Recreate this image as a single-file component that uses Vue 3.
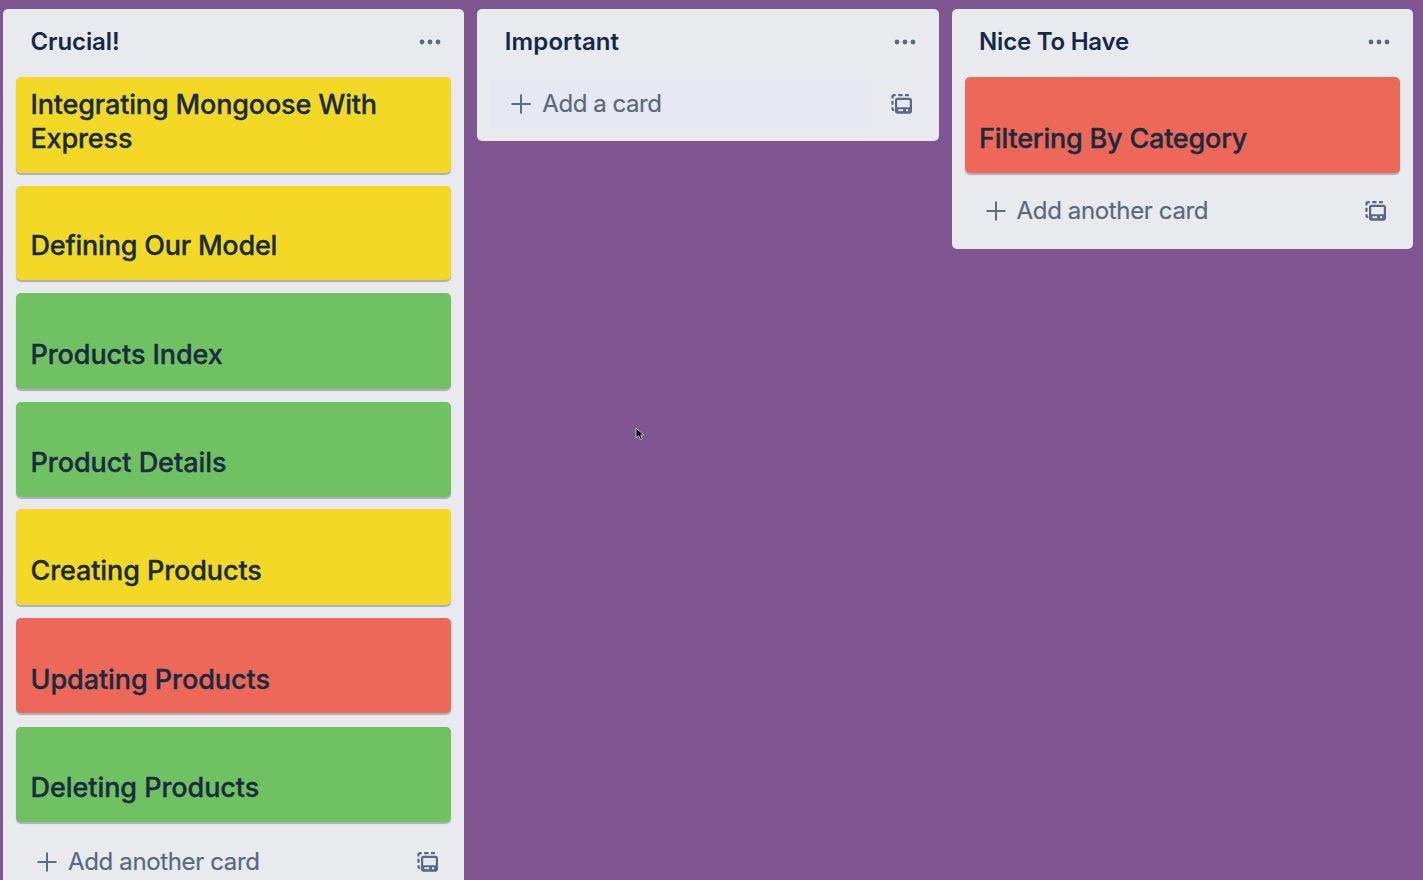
<script setup>
const lists = [
  {
    title: 'Crucial!',
    kind: 'crucial',
    action: 'Add another card',
    cards: [
      { title: 'Integrating Mongoose With Express', color: 'yellow', fit: 'mongoose' },
      { title: 'Defining Our Model', color: 'yellow', fit: 'model' },
      { title: 'Products Index', color: 'green', fit: 'index' },
      { title: 'Product Details', color: 'green', fit: 'details' },
      { title: 'Creating Products', color: 'yellow', fit: 'creating' },
      { title: 'Updating Products', color: 'red', fit: 'updating' },
      { title: 'Deleting Products', color: 'green', fit: 'deleting' },
    ],
  },
  { title: 'Important', kind: 'important', action: 'Add a card', cards: [] },
  {
    title: 'Nice To Have',
    kind: 'nice',
    action: 'Add another card',
    cards: [{ title: 'Filtering By Category', color: 'red', fit: 'category' }],
  },
]
</script>

<template>
  <main class="board">
    <section v-for="list in lists" :key="list.title" class="list" :class="list.kind">
      <header class="head">
        <h2>{{ list.title }}</h2>
        <svg class="dots" width="22" height="6" viewBox="0 0 22 6">
          <circle cx="3" cy="3" r="2.4" /><circle cx="11" cy="3" r="2.4" /><circle cx="19" cy="3" r="2.4" />
        </svg>
      </header>
      <div v-if="list.cards.length" class="cards">
        <article v-for="card in list.cards" :key="card.title" class="card" :class="[card.color, card.fit]">
          <span>{{ card.title }}</span>
        </article>
      </div>
      <footer class="foot" :class="{ empty: !list.cards.length }">
        <svg class="plus" width="20" height="20" viewBox="0 0 20 20">
          <path d="M10 0.5V19.5M0.5 10H19.5" />
        </svg>
        <span class="action">{{ list.action }}</span>
        <svg class="template" width="22" height="20" viewBox="0 0 22 20">
          <path class="dash" d="M1.5 4.4V2.8Q1.5 1.2 3.1 1.2H4.7M7.2 1.2H11.5M14 1.2H17.9M1.5 6.8V10.8M1.5 13.2V14.6Q1.5 16.1 3.2 16.1" />
          <rect class="frame" x="5.1" y="4.8" width="14.8" height="13.8" rx="1.6" />
          <path class="fill" fill-rule="evenodd" d="M5 13.3H20V19H5ZM7.4 15.3V17.3H12.2V15.3ZM15 15.3V17.3H17.2V15.3Z" />
        </svg>
      </footer>
    </section>
    <svg class="cursor" width="10" height="15" viewBox="0 0 10 15">
      <path d="M1 1V11L3.6 8.8L5.3 12.6L7.3 11.7L5.7 8.1H9Z" />
    </svg>
  </main>
</template>

<style>
html,
body {
  margin: 0;
  overflow: hidden;
  background: #7f5692;
}
</style>

<style scoped>
.board {
  box-sizing: border-box;
  position: relative;
  width: 1423px;
  height: 880px;
  padding: 9px 10px 0 3px;
  overflow: hidden;
  display: flex;
  align-items: flex-start;
  gap: 13px;
  background: #7f5692;
  font-family: Inter, "Liberation Sans", sans-serif;
}
.list {
  box-sizing: border-box;
  flex: 0 0 461.3px;
  padding: 0 13px 10px;
  border-radius: 5px;
  background: #e8eaed;
}
.head {
  height: 67.6px;
  box-sizing: border-box;
  padding: 0 10px 1.6px 14.5px;
  display: flex;
  align-items: center;
  justify-content: space-between;
}
h2 {
  margin: 0;
  color: #15284b;
  font-size: 24px;
  font-weight: 600;
  line-height: 30px;
}
.crucial h2 { letter-spacing: -0.12px; }
.important h2 { letter-spacing: 0.12px; }
.nice h2 { letter-spacing: -0.22px; }
.dots {
  fill: #5b6a83;
}
.cards {
  display: flex;
  flex-direction: column;
}
.card {
  box-sizing: border-box;
  height: 96px;
  padding: 0 14px 17px 14.5px;
  display: flex;
  align-items: flex-end;
  border-radius: 5px;
  box-shadow: 0 1.2px 1px #a9afbd;
  color: #182b40;
  font-size: 27px;
  font-weight: 500;
  line-height: 34px;
  -webkit-text-stroke: 0.35px #182b40;
}
.yellow { background: #f3d926; }
.green { background: #70c162; }
.red { background: #ed6859; }
.mongoose { margin-bottom: 13px; letter-spacing: -0.16px; }
.model { height: 94.5px; margin-bottom: 13px; letter-spacing: -0.22px; }
.index { margin-bottom: 13px; letter-spacing: -0.08px; }
.details { height: 94.6px; margin-bottom: 12.7px; letter-spacing: -0.04px; }
.creating { margin-bottom: 13px; letter-spacing: -0.1px; }
.updating { height: 94.5px; padding-bottom: 16px; margin-bottom: 14.5px; letter-spacing: -0.06px; }
.deleting { height: 95px; margin-bottom: 1.5px; letter-spacing: -0.06px; }
.category { margin-bottom: 0.4px; letter-spacing: -0.2px; }
.foot {
  height: 66px;
  box-sizing: border-box;
  padding: 10px 12.5px 0 21px;
  display: flex;
  align-items: center;
}
.foot.empty {
  height: 54.4px;
  padding-top: 0;
  background: linear-gradient(90deg, #e7e9f0 0 86%, #e8eaed 92%);
}
.plus {
  fill: none;
  stroke: #5e6d86;
  stroke-width: 2;
}
.action {
  flex: 1;
  margin-left: 11px;
  color: #586981;
  font-size: 24px;
  line-height: 30px;
  letter-spacing: -0.36px;
  -webkit-text-stroke: 0.2px #586981;
}
.important .action { letter-spacing: -0.44px; }
.dash, .frame {
  fill: none;
  stroke: #596883;
  stroke-width: 2.2;
}
.fill { fill: #596883; }
.cursor {
  position: absolute;
  left: 635px;
  top: 427px;
  fill: #08080a;
  stroke: #c6b2cf;
  stroke-width: 1;
}
</style>
